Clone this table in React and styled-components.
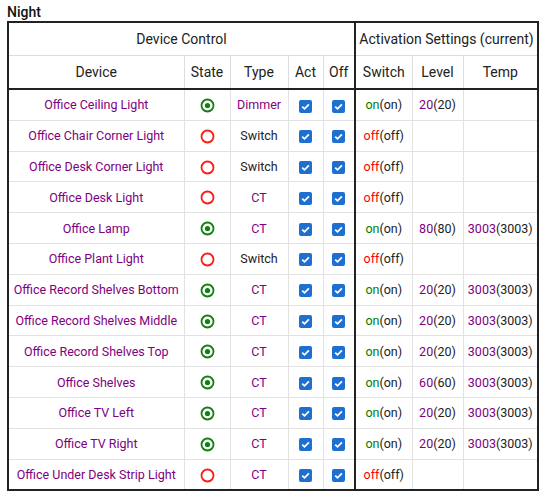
import React from 'react';
import styled, {createGlobalStyle} from 'styled-components';

const GlobalStyle = createGlobalStyle`
  body {
    margin: 0;
    background: #fff;
    font-family: Roboto, "Noto Sans", sans-serif;
    color: #212121;
  }
`;

const Page = styled.div`
  padding: 3px 9px 0 7px;
`;

const Title = styled.div`
  font-size: 14px;
  font-weight: 500;
  line-height: 18px;
  height: 18px;
  color: #111;
`;

const Table = styled.table`
  border-collapse: collapse;
  table-layout: fixed;
  width: 530px;
  border: 2px solid #222;
  font-size: 12.5px;
`;

const HeadCell = styled.th`
  font-weight: 400;
  font-size: 14px;
  height: 32px;
  padding: 0;
  text-align: center;
  color: #222;
  border: 1px solid #ddd;
  border-left: ${p => (p.$split ? '2px solid #222' : '1px solid #ddd')};
  border-bottom: ${p => (p.$last ? '2px solid #222' : '1px solid #ddd')};
`;

const Cell = styled.td`
  height: 29.8px;
  padding: 0;
  text-align: center;
  white-space: nowrap;
  overflow: hidden;
  border: 1px solid #e2e2e2;
  border-left: ${p => (p.$split ? '2px solid #222' : '1px solid #e2e2e2')};
  color: ${p => p.$color || '#222'};
`;

const Purple = styled.span`
  color: #800080;
`;

const Val = styled.span`
  color: ${p => p.$color};
`;

const IconWrap = styled.span`
  display: inline-flex;
  vertical-align: middle;
`;

const StateIcon = ({on}) => (
  <IconWrap>
    <svg width="15" height="15" viewBox="0 0 15 15">
      <circle cx="7.5" cy="7.5" r="6" fill="none" stroke={on ? '#108010' : '#ff1a1a'} strokeWidth="1.8" />
      {on && <circle cx="7.5" cy="7.5" r="2.6" fill="#108010" />}
    </svg>
  </IconWrap>
);

const Check = () => (
  <IconWrap>
    <svg width="13" height="13" viewBox="0 0 13 13">
      <rect x="0" y="0" width="13" height="13" rx="2" fill="#1d6fd0" />
      <path d="M3.2 6.6 L5.5 8.8 L9.9 4.3" fill="none" stroke="#fff" strokeWidth="1.8" />
    </svg>
  </IconWrap>
);

const devices = [
  {name: 'Office Ceiling Light', on: true, type: 'Dimmer', level: '20'},
  {name: 'Office Chair Corner Light', on: false, type: 'Switch'},
  {name: 'Office Desk Corner Light', on: false, type: 'Switch'},
  {name: 'Office Desk Light', on: false, type: 'CT'},
  {name: 'Office Lamp', on: true, type: 'CT', level: '80', temp: '3003'},
  {name: 'Office Plant Light', on: false, type: 'Switch'},
  {name: 'Office Record Shelves Bottom', on: true, type: 'CT', level: '20', temp: '3003'},
  {name: 'Office Record Shelves Middle', on: true, type: 'CT', level: '20', temp: '3003'},
  {name: 'Office Record Shelves Top', on: true, type: 'CT', level: '20', temp: '3003'},
  {name: 'Office Shelves', on: true, type: 'CT', level: '60', temp: '3003'},
  {name: 'Office TV Left', on: true, type: 'CT', level: '20', temp: '3003'},
  {name: 'Office TV Right', on: true, type: 'CT', level: '20', temp: '3003'},
  {name: 'Office Under Desk Strip Light', on: false, type: 'CT'},
];

export default function App() {
  return (
    <Page>
      <GlobalStyle />
      <Title>Night</Title>
      <Table>
        <colgroup>
          <col style={{width: 176}} />
          <col style={{width: 46}} />
          <col style={{width: 58}} />
          <col style={{width: 35}} />
          <col style={{width: 32}} />
          <col style={{width: 57}} />
          <col style={{width: 51}} />
          <col style={{width: 75}} />
        </colgroup>
        <thead>
          <tr>
            <HeadCell colSpan={5}>Device Control</HeadCell>
            <HeadCell colSpan={3} $split>Activation Settings (current)</HeadCell>
          </tr>
          <tr>
            <HeadCell $last>Device</HeadCell>
            <HeadCell $last>State</HeadCell>
            <HeadCell $last>Type</HeadCell>
            <HeadCell $last>Act</HeadCell>
            <HeadCell $last>Off</HeadCell>
            <HeadCell $last $split>Switch</HeadCell>
            <HeadCell $last>Level</HeadCell>
            <HeadCell $last>Temp</HeadCell>
          </tr>
        </thead>
        <tbody>
          {devices.map(d => (
            <tr key={d.name}>
              <Cell $color="#800080">{d.name}</Cell>
              <Cell><StateIcon on={d.on} /></Cell>
              <Cell $color={d.type === 'Switch' ? '#222' : '#800080'}>{d.type}</Cell>
              <Cell><Check /></Cell>
              <Cell><Check /></Cell>
              <Cell $split>
                {d.on ? (
                  <><Val $color="#008000">on</Val>(on)</>
                ) : (
                  <><Val $color="#ff0000">off</Val>(off)</>
                )}
              </Cell>
              <Cell>{d.level && <><Purple>{d.level}</Purple>({d.level})</>}</Cell>
              <Cell>{d.temp && <><Purple>{d.temp}</Purple>({d.temp})</>}</Cell>
            </tr>
          ))}
        </tbody>
      </Table>
    </Page>
  );
}
